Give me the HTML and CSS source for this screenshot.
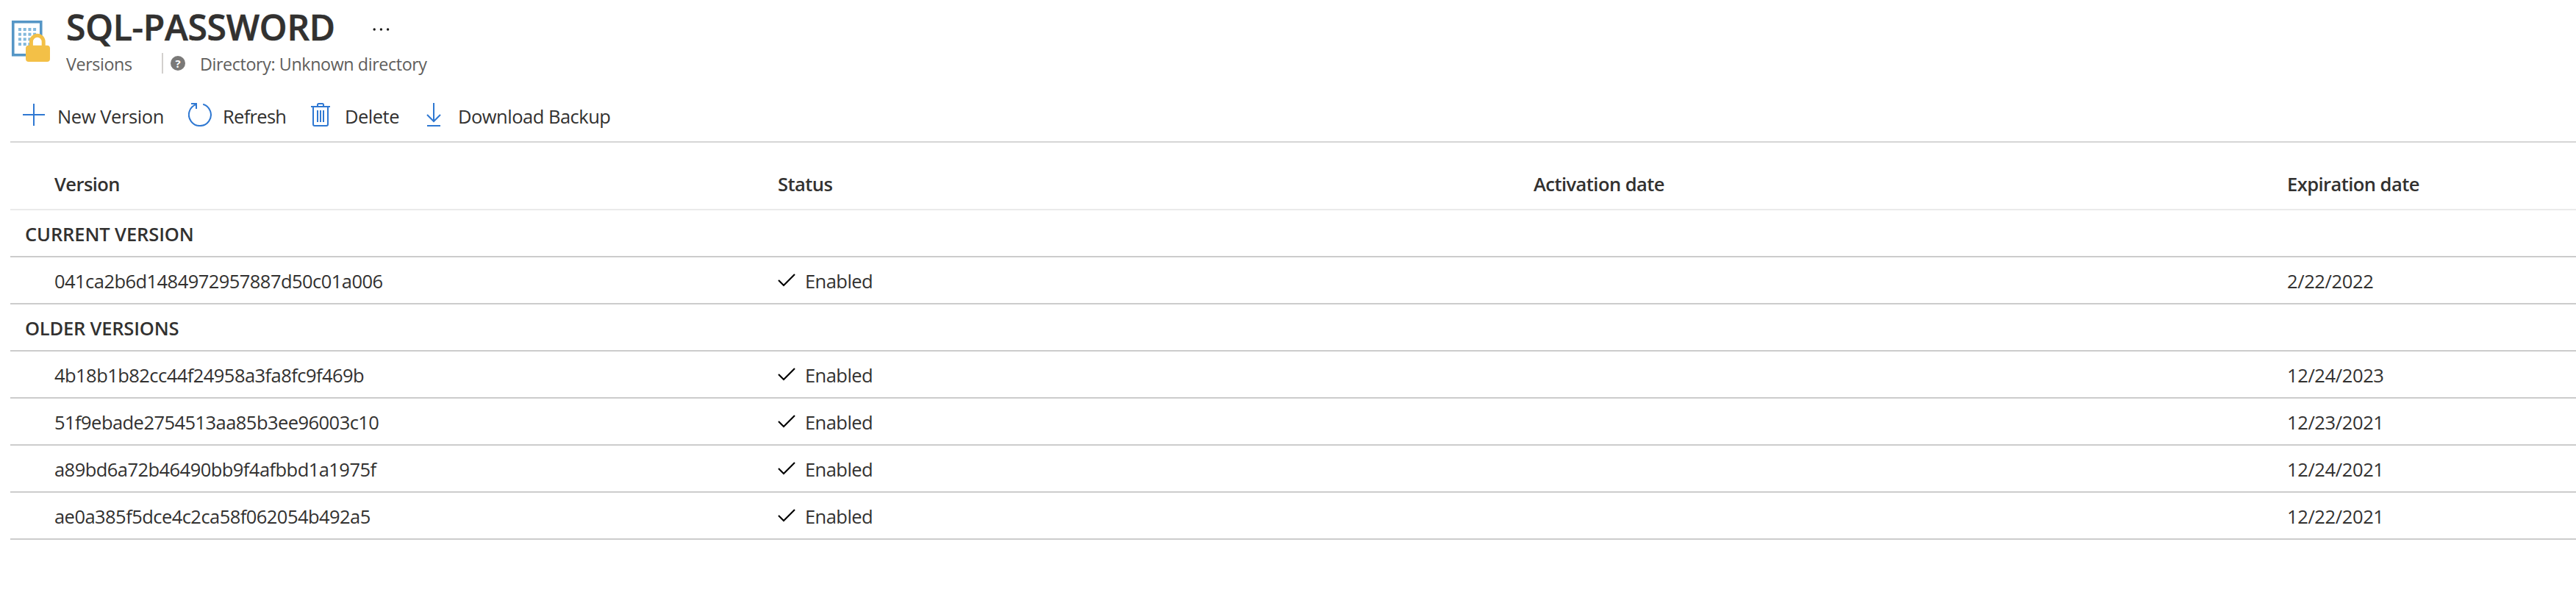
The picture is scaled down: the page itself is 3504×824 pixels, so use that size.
FILE: index.html
```html
<!DOCTYPE html>
<html lang="en">
<head>
<meta charset="utf-8">
<title>SQL-PASSWORD</title>
<link rel="stylesheet" href="styles.css">
</head>
<body>
<header class="blade-header">
  <svg class="secret-icon" viewBox="0 0 56 60" width="56" height="60">
    <rect x="3.75" y="3.75" width="38" height="45" fill="#fff" stroke="#5596c6" stroke-width="3.6"/>
    <g fill="#83b9dc">
      <rect x="11" y="12" width="4" height="4"/><rect x="17.7" y="12" width="4" height="4"/><rect x="24.4" y="12" width="4" height="4"/><rect x="31.1" y="12" width="4" height="4"/>
      <rect x="11" y="18.7" width="4" height="4"/><rect x="17.7" y="18.7" width="4" height="4"/><rect x="24.4" y="18.7" width="4" height="4"/><rect x="31.1" y="18.7" width="4" height="4"/>
      <rect x="11" y="25.4" width="4" height="4"/><rect x="17.7" y="25.4" width="4" height="4"/><rect x="24.4" y="25.4" width="4" height="4"/><rect x="31.1" y="25.4" width="4" height="4"/>
      <rect x="11" y="32.1" width="4" height="4"/><rect x="17.7" y="32.1" width="4" height="4"/><rect x="24.4" y="32.1" width="4" height="4"/>
    </g>
    <path d="M28.4 38V31a8.4 8.8 0 0 1 16.8 0V38" fill="#fff" stroke="#f3c047" stroke-width="5"/>
    <rect x="21" y="35.8" width="33" height="22.2" rx="4" fill="#f3c047"/>
  </svg>
  <div class="heading">
    <div class="title-row">
      <h1 class="title">SQL-PASSWORD</h1>
      <svg class="more" viewBox="0 0 24 4" width="24" height="4"><circle cx="2.2" cy="2" r="1.7"/><circle cx="11.4" cy="2" r="1.7"/><circle cx="20.6" cy="2" r="1.7"/></svg>
    </div>
    <div class="subtitle">
      <span class="kind">Versions</span>
      <span class="divider"></span>
      <span class="help">?</span>
      <span class="directory">Directory: Unknown directory</span>
    </div>
  </div>
</header>
<nav class="toolbar">
  <span class="command command-new">
    <svg class="icon" viewBox="0 0 32 32" width="32" height="32"><path d="M16 1v30M1 16h30"/></svg>
    <span>New Version</span>
  </span>
  <span class="command command-refresh">
    <svg class="icon" viewBox="0 0 32 32" width="32" height="32"><path d="M20.2 1.7A15 15 0 1 1 11 1.9M4 1h7v7"/></svg>
    <span>Refresh</span>
  </span>
  <span class="command command-delete">
    <svg class="icon" viewBox="0 0 26 32" width="26" height="32"><path d="M0 5h26M9 5V2.500Q9 1 10.500 1h5Q17 1 17 2.500V5M3 5v24q0 2 2 2h16q2 0 2-2V5M9 10v16M13 10v16M17 10v16"/></svg>
    <span>Delete</span>
  </span>
  <span class="command command-download">
    <svg class="icon" viewBox="0 0 20 32" width="20" height="32"><path d="M10 0v25M1 16l9 9 9-9M1 31h18"/></svg>
    <span>Download Backup</span>
  </span>
</nav>
<main class="versions">
  <div class="row row-head"><span>Version</span><span>Status</span><span>Activation date</span><span>Expiration date</span></div>
  <div class="group group-current">CURRENT VERSION</div>
  <div class="row"><span>041ca2b6d1484972957887d50c01a006</span><span class="status"><svg class="check" viewBox="0 0 24 18" width="24" height="18"><path d="M1 9l7 7L23 1"/></svg>Enabled</span><span></span><span class="date">2/22/2022</span></div>
  <div class="group group-older">OLDER VERSIONS</div>
  <div class="row"><span>4b18b1b82cc44f24958a3fa8fc9f469b</span><span class="status"><svg class="check" viewBox="0 0 24 18" width="24" height="18"><path d="M1 9l7 7L23 1"/></svg>Enabled</span><span></span><span class="date">12/24/2023</span></div>
  <div class="row"><span>51f9ebade2754513aa85b3ee96003c10</span><span class="status"><svg class="check" viewBox="0 0 24 18" width="24" height="18"><path d="M1 9l7 7L23 1"/></svg>Enabled</span><span></span><span class="date">12/23/2021</span></div>
  <div class="row"><span>a89bd6a72b46490bb9f4afbbd1a1975f</span><span class="status"><svg class="check" viewBox="0 0 24 18" width="24" height="18"><path d="M1 9l7 7L23 1"/></svg>Enabled</span><span></span><span class="date">12/24/2021</span></div>
  <div class="row"><span>ae0a385f5dce4c2ca58f062054b492a5</span><span class="status"><svg class="check" viewBox="0 0 24 18" width="24" height="18"><path d="M1 9l7 7L23 1"/></svg>Enabled</span><span></span><span class="date">12/22/2021</span></div>
</main>
</body>
</html>
```
FILE: styles.css
```css
* { box-sizing: border-box; }
body {
  margin: 0;
  padding-left: 14px;
  height: 824px;
  overflow: hidden;
  background: #fff;
  color: #323130;
  font: 25.5px/32px "Open Sans", "Noto Sans", sans-serif;
  letter-spacing: -0.55px;
  white-space: nowrap;
}
svg { display: block; flex: none; }

.blade-header { display: flex; height: 120px; }
.secret-icon { margin-top: 26px; }
.heading { margin-left: 20px; }
.title-row { display: flex; height: 70px; }
.title {
  width: 366px;
  margin: 5px 0 0;
  font-size: 48px;
  line-height: 64px;
  font-weight: 600;
  letter-spacing: -0.25px;
  -webkit-text-stroke: 0.6px #323130;
}
.more { margin: 38px 0 0 51px; fill: #1b1a19; }
.subtitle {
  display: flex;
  align-items: center;
  height: 32px;
  color: #605e5c;
  font-size: 23.3px;
  letter-spacing: -0.4px;
}
.kind { width: 130px; padding-top: 2px; }
.directory { padding-top: 2px; }
.divider { width: 2px; height: 28px; background: #d2d0ce; }
.help {
  width: 20px;
  height: 20px;
  margin: 0 20px 0 10px;
  border-radius: 50%;
  background: #7a7978;
  color: #fff;
  font-size: 15px;
  line-height: 20px;
  font-weight: 700;
  text-align: center;
  letter-spacing: 0;
}

.toolbar {
  display: flex;
  align-items: flex-start;
  height: 74px;
  padding: 20px 0 0 16px;
  border-bottom: 2px solid #d6d6d6;
  letter-spacing: -0.5px;
}
.command { display: flex; }
.command > span { padding-top: 2px; }
.icon { fill: none; stroke: #2f78d2; stroke-width: 2; }
.command-new { width: 226px; gap: 16px; letter-spacing: -0.4px; }
.command-refresh { width: 167px; gap: 15px; letter-spacing: -0.7px; }
.command-delete { width: 157px; gap: 20px; }
.command-download { gap: 23px; }

.versions { padding-top: 26px; }
.row {
  display: grid;
  grid-template-columns: 984px 1028px 1025px 1fr;
  align-items: center;
  height: 64px;
  padding: 2px 0 0 60px;
  border-bottom: 2px solid #ccc;
}
.row-head {
  height: 66px;
  padding: 0 0 4px 60px;
  border-color: #eaeaea;
  font-weight: 600;
}
.status { display: flex; align-items: center; gap: 13px; }
.check { margin-top: -2px; fill: none; stroke: #000; stroke-width: 2.2; }
.date { letter-spacing: -0.38px; }
.group {
  height: 64px;
  padding: 16px 0 0 20px;
  border-bottom: 2px solid #ccc;
  font-weight: 600;
}
.group-current { letter-spacing: -0.1px; }
.group-older { letter-spacing: -0.2px; }
```
